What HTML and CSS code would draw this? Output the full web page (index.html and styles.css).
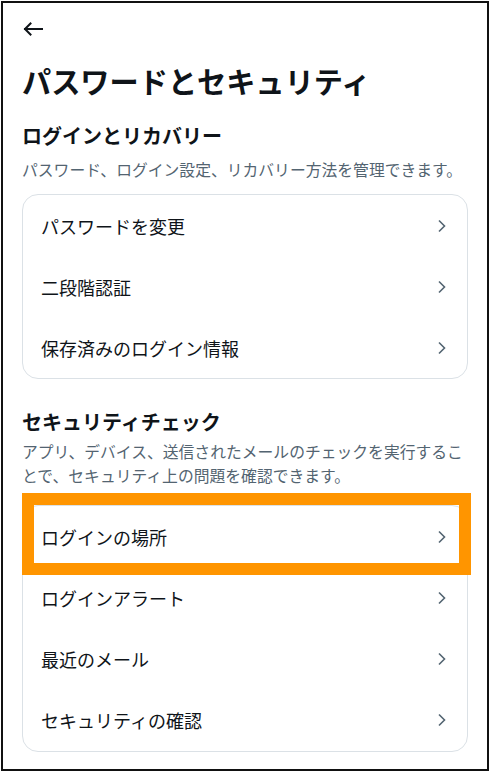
FILE: index.html
```html
<!DOCTYPE html>
<html lang="ja">
<head>
<meta charset="utf-8">
<title>パスワードとセキュリティ</title>
<link rel="stylesheet" href="styles.css">
</head>
<body>
<div class="frame">
  <div class="topbar">
    <svg class="back" width="20" height="14" viewBox="0 0 20 14" aria-hidden="true">
      <path d="M19 7H2M7.5 1.5L2 7l5.5 5.5" fill="none" stroke="#0f1419" stroke-width="2" stroke-linecap="square" stroke-linejoin="miter"/>
    </svg>
  </div>
  <h1 class="title">パスワードとセキュリティ</h1>

  <h2 class="sec-title sec1">ログインとリカバリー</h2>
  <p class="desc desc1">パスワード、ログイン設定、リカバリー方法を管理できます。</p>
  <div class="card card1">
    <div class="row"><span class="label">パスワードを変更</span><svg class="chev" width="10" height="14" viewBox="0 0 10 14"><path d="M2 1.5L7.5 7 2 12.5" fill="none" stroke="#536471" stroke-width="1.6"/></svg></div>
    <div class="row"><span class="label">二段階認証</span><svg class="chev" width="10" height="14" viewBox="0 0 10 14"><path d="M2 1.5L7.5 7 2 12.5" fill="none" stroke="#536471" stroke-width="1.6"/></svg></div>
    <div class="row"><span class="label">保存済みのログイン情報</span><svg class="chev" width="10" height="14" viewBox="0 0 10 14"><path d="M2 1.5L7.5 7 2 12.5" fill="none" stroke="#536471" stroke-width="1.6"/></svg></div>
  </div>

  <h2 class="sec-title sec2">セキュリティチェック</h2>
  <p class="desc desc2">アプリ、デバイス、送信されたメールのチェックを実行することで、セキュリティ上の問題を確認できます。</p>
  <div class="card card2">
    <div class="row highlighted"><span class="label">ログインの場所</span><svg class="chev" width="10" height="14" viewBox="0 0 10 14"><path d="M2 1.5L7.5 7 2 12.5" fill="none" stroke="#536471" stroke-width="1.6"/></svg><span class="mark"></span></div>
    <div class="row"><span class="label">ログインアラート</span><svg class="chev" width="10" height="14" viewBox="0 0 10 14"><path d="M2 1.5L7.5 7 2 12.5" fill="none" stroke="#536471" stroke-width="1.6"/></svg></div>
    <div class="row"><span class="label">最近のメール</span><svg class="chev" width="10" height="14" viewBox="0 0 10 14"><path d="M2 1.5L7.5 7 2 12.5" fill="none" stroke="#536471" stroke-width="1.6"/></svg></div>
    <div class="row"><span class="label">セキュリティの確認</span><svg class="chev" width="10" height="14" viewBox="0 0 10 14"><path d="M2 1.5L7.5 7 2 12.5" fill="none" stroke="#536471" stroke-width="1.6"/></svg></div>
  </div>
</div>
</body>
</html>
```

FILE: styles.css
```css
* { box-sizing: border-box; }
html, body { margin: 0; padding: 0; background: #fff; }
body {
  font-family: "Noto Sans CJK JP", "Noto Sans", sans-serif;
  color: #0f1419;
}
.frame {
  margin: 1px 0 0 1px;
  width: 488px;
  height: 770px;
  border: 2px solid #111;
  padding: 0 19px;
  overflow: hidden;
}
.topbar {
  height: 36px;
  padding-top: 16px;
  display: flex;
  align-items: flex-start;
}
.back { display: block; margin-left: 1px; margin-top: 3px; }
.title {
  margin: 23px 0 0;
  font-size: 29.2px;
  line-height: 36px;
  font-weight: 700;
}
.sec-title {
  margin: 0;
  font-size: 20px;
  line-height: 28px;
  font-weight: 700;
}
.sec1 { margin-top: 24px; }
.sec2 { margin-top: 29px; }
.desc {
  margin: 0;
  font-size: 15.8px;
  line-height: 24px;
  color: #536471;
}
.desc1 { margin-top: 8px; }
.desc2 { margin-top: 4px; }
.card {
  border: 1px solid #dbe1e6;
  border-radius: 16px;
  background: #fff;
}
.card1 { margin-top: 12px; }
.card2 { margin-top: 17px; }
.row {
  position: relative;
  height: 61px;
  display: flex;
  align-items: center;
  justify-content: space-between;
  padding: 0 20px 0 18px;
}
.card2 .row { height: 61.25px; }
.label {
  font-size: 18px;
  line-height: 24px;
  color: #0f1419;
}
.chev { display: block; }
.mark {
  position: absolute;
  top: -13px;
  left: -1px;
  right: -4px;
  bottom: -8px;
  border: 12px solid #ff9500;
  pointer-events: none;
}
```
